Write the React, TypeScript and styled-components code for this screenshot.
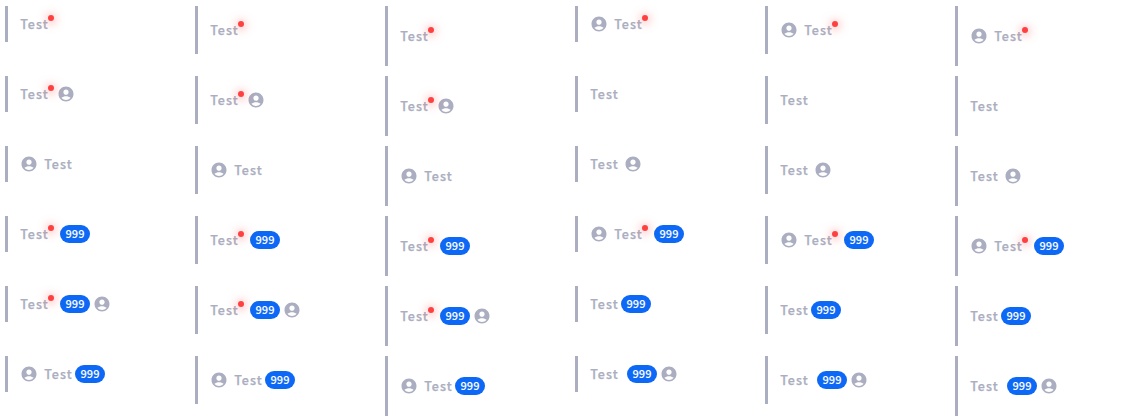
import React from 'react';
import styled, { createGlobalStyle } from 'styled-components';

const GlobalStyle = createGlobalStyle`
  *, *::before, *::after { box-sizing: border-box; }
  body {
    margin: 0;
    background: #ffffff;
    overflow: hidden;
    font-family: "Noto Sans CJK SC", "Noto Sans", sans-serif;
  }
`;

const Board = styled.main`
  display: grid;
  grid-template-columns: repeat(6, 190px);
  grid-template-rows: repeat(6, 70px);
  padding: 6px 0 0 5px;
  width: 1145px;
  height: 420px;
`;

const Tab = styled.div<{ $height: number }>`
  display: flex;
  align-items: center;
  align-self: start;
  justify-self: start;
  height: ${(p) => p.$height}px;
  padding-left: 12px;
  border-left: 3px solid #abaec0;
  color: #abaec0;
`;

const Label = styled.span`
  position: relative;
  width: 28px;
  font-size: 12.5px;
  line-height: 20px;
  font-weight: 500;
  letter-spacing: 1px;
  text-indent: 0.2px;
  -webkit-text-stroke: 0.25px currentColor;
  white-space: nowrap;
`;

const Dot = styled.i`
  position: absolute;
  left: 28px;
  top: 1px;
  width: 6px;
  height: 6px;
  border-radius: 50%;
  background: #ff4040;
  box-shadow: 0 1px 10px 1px rgba(255, 64, 64, 0.5);
`;

const Badge = styled.span<{ $gap: number }>`
  width: 30px;
  height: 18px;
  margin-left: ${(p) => p.$gap}px;
  border-radius: 9px;
  background: #0d69f5;
  color: #ffffff;
  font-size: 11px;
  line-height: 16px;
  font-weight: 500;
  -webkit-text-stroke: 0.05px currentColor;
  text-align: center;
`;

const Icon = styled.svg<{ $left?: number; $right?: number }>`
  flex: none;
  width: 18px;
  height: 18px;
  margin-left: ${(p) => p.$left ?? 0}px;
  margin-right: ${(p) => p.$right ?? 0}px;
  fill: currentColor;
`;

const Account = (props: { $left?: number; $right?: number }) => (
  <Icon viewBox="0 0 24 24" {...props}>
    <path d="M12 2C6.48 2 2 6.48 2 12s4.48 10 10 10 10-4.48 10-10S17.52 2 12 2zm0 4c1.93 0 3.5 1.57 3.5 3.5S13.93 13 12 13s-3.5-1.57-3.5-3.5S10.07 6 12 6zm0 14c-2.03 0-4.43-.82-6.14-2.88C7.55 15.8 9.68 15 12 15s4.45.8 6.14 2.12C16.43 19.18 14.03 20 12 20z" />
  </Icon>
);

interface Variant {
  dot?: boolean;
  badge?: boolean;
  icon?: 'left' | 'right';
}

const MenuTab = ({ dot, badge, icon, height }: Variant & { height: number }) => {
  const badgeGap = dot ? 12 : icon === 'right' ? 9 : 3;
  const iconGap = badge ? 3 : dot ? 9 : 6;
  return (
    <Tab $height={height}>
      {icon === 'left' && <Account $right={6} />}
      <Label>
        Test
        {dot && <Dot />}
      </Label>
      {badge && <Badge $gap={badgeGap}>999</Badge>}
      {icon === 'right' && <Account $left={iconGap} />}
    </Tab>
  );
};

const heights = [36, 48, 60];

const variants: Variant[] = [
  { dot: true },
  { dot: true, icon: 'left' },
  { dot: true, icon: 'right' },
  {},
  { icon: 'left' },
  { icon: 'right' },
  { dot: true, badge: true },
  { dot: true, badge: true, icon: 'left' },
  { dot: true, badge: true, icon: 'right' },
  { badge: true },
  { badge: true, icon: 'left' },
  { badge: true, icon: 'right' },
];

export default function App() {
  return (
    <>
      <GlobalStyle />
      <Board>
        {variants.map((variant, i) =>
          heights.map((height) => <MenuTab key={`${i}-${height}`} height={height} {...variant} />),
        )}
      </Board>
    </>
  );
}
